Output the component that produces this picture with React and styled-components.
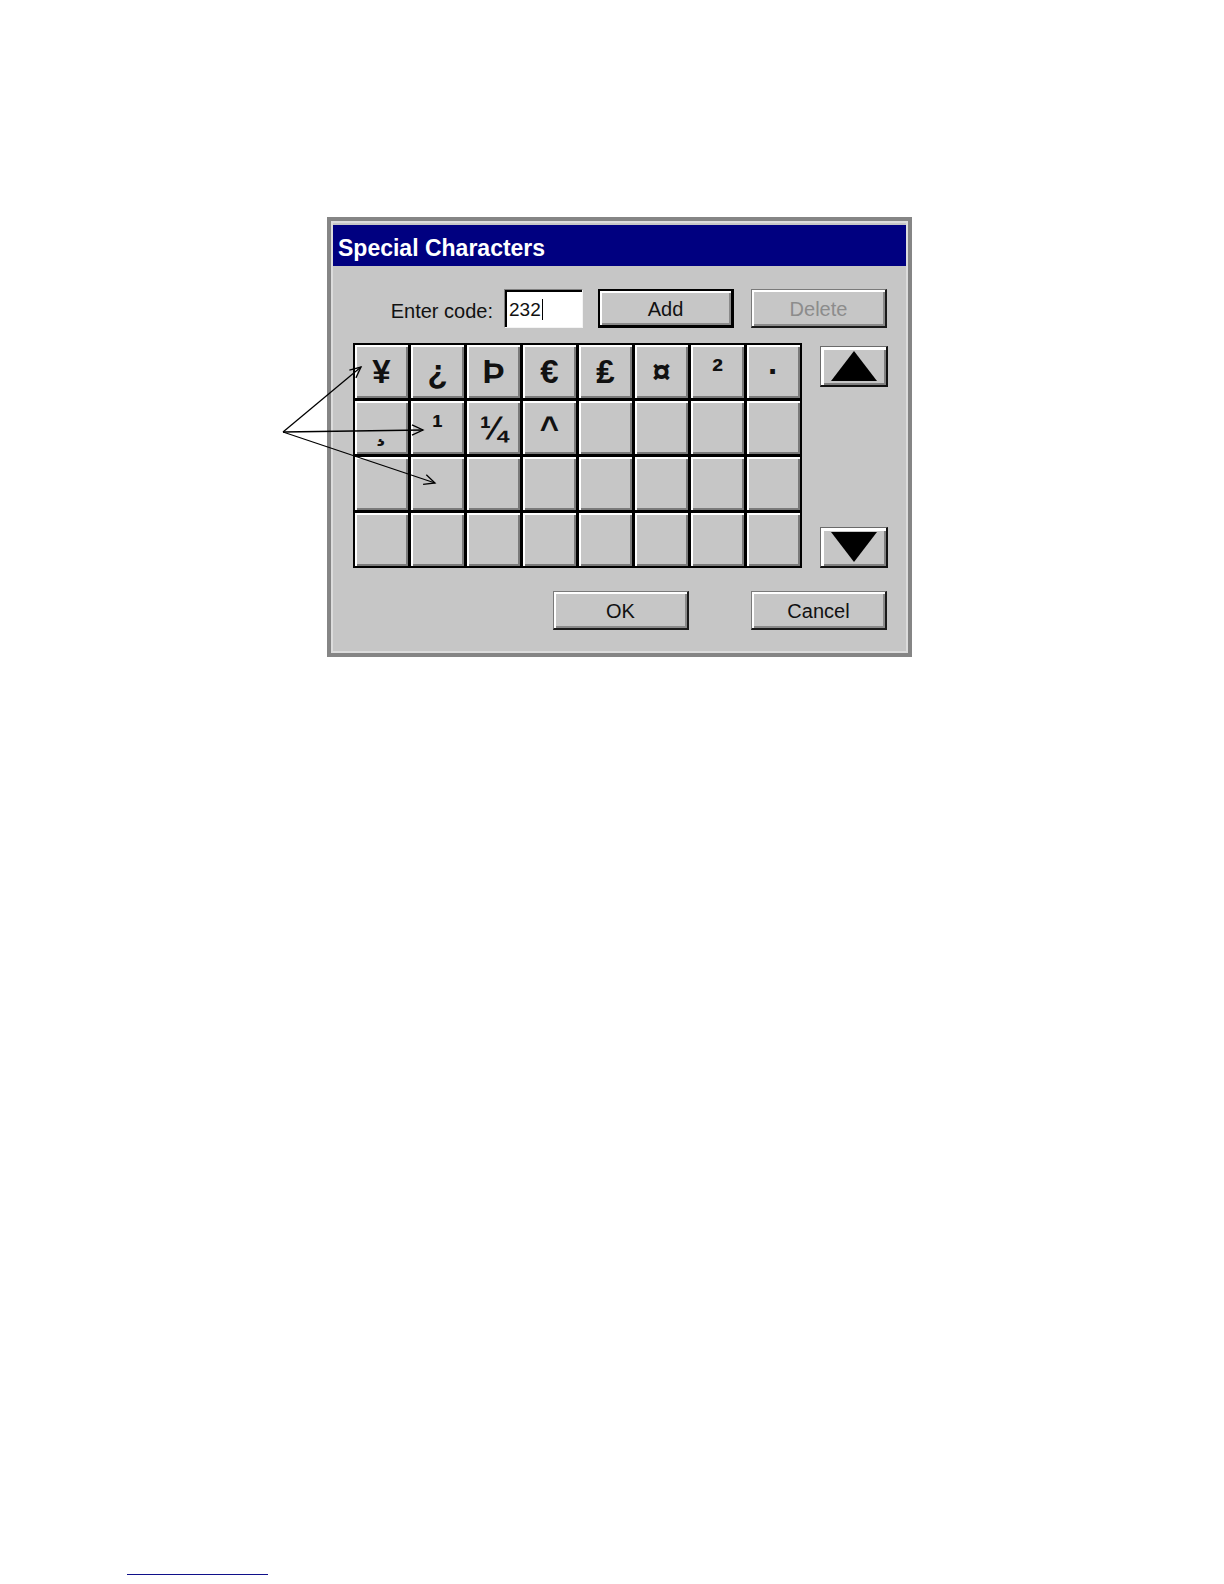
import styled, { createGlobalStyle } from 'styled-components';

const GlobalStyle = createGlobalStyle`
  html, body {
    margin: 0;
    padding: 0;
    background: #ffffff;
  }
  body {
    font-family: "Liberation Sans", Arial, sans-serif;
  }
`;

const Page = styled.div`
  position: relative;
  width: 1224px;
  height: 1584px;
  overflow: hidden;
  display: flex;
  flex-direction: column;
  align-items: flex-start;
`;

const Dialog = styled.div`
  width: 585px;
  margin: 217px 0 0 327px;
  box-sizing: border-box;
  border: 4px solid #858585;
  background: #c6c6c6;
  padding: 4px 2px 2px;
  box-shadow: inset 0 0 0 2px #dcdcdc;
`;

const TitleBar = styled.div`
  height: 41px;
  box-sizing: border-box;
  padding: 5px 0 0 5px;
  display: flex;
  align-items: center;
  background: #000080;
  color: #ffffff;
  font-size: 23px;
  font-weight: 700;
`;

const Body = styled.div`
  display: flex;
  flex-direction: column;
  padding: 23px 19px 21px 20px;
`;

const TopRow = styled.div`
  height: 39px;
  display: flex;
  justify-content: flex-end;
  align-items: center;
`;

const Label = styled.span`
  margin-right: 11px;
  padding-top: 5px;
  font-size: 20px;
  color: #111;
`;

const CodeField = styled.div`
  width: 79px;
  height: 39px;
  box-sizing: border-box;
  margin-right: 15px;
  padding: 2px 0 0 4px;
  display: flex;
  align-items: center;
  background: #ffffff;
  border: 1px solid;
  border-color: #808080 #f4f4f4 #f4f4f4 #808080;
  box-shadow: inset 2px 2px 0 #000;
  font-size: 19px;
  color: #111;
`;

const Caret = styled.span`
  display: inline-block;
  width: 1px;
  height: 21px;
  margin-left: 1px;
  background: #000;
`;

const Button = styled.button`
  width: 136px;
  height: 39px;
  box-sizing: border-box;
  margin: 0;
  padding: 2px 0 0;
  background: #c6c6c6;
  font-family: "Liberation Sans", Arial, sans-serif;
  font-size: 20px;
  color: ${(p) => (p.disabled ? '#8c8c8c' : '#111')};
  border-style: solid;
  border-width: ${(p) => (p.$isDefault ? '2px 3px 3px 2px' : '1px 2px 2px 1px')};
  border-color: ${(p) => (p.$isDefault ? '#000' : '#7a7a7a #1a1a1a #1a1a1a #7a7a7a')};
  box-shadow: inset 2px 2px 0 #ffffff, inset -2px -2px 0 #8a8a8a;
  margin-left: ${(p) => p.$gap || 0}px;
`;

const MiddleRow = styled.div`
  display: flex;
  gap: 18px;
  margin-top: 15px;
`;

const Grid = styled.div`
  display: grid;
  grid-template-columns: repeat(8, 53px);
  grid-auto-rows: 53px;
  gap: 3px;
  border: 2px solid #000;
  background: #000;
`;

const Cell = styled.div`
  display: flex;
  align-items: center;
  justify-content: center;
  background: #c6c6c6;
  box-shadow: inset 2px 2px 0 #ffffff, inset -2px -2px 0 #7a7a7a;
  font-size: 33px;
  font-weight: 700;
  color: #111;
  font-family: "Liberation Sans", "DejaVu Sans", sans-serif;
`;

const ArrowColumn = styled.div`
  display: flex;
  flex-direction: column;
  justify-content: space-between;
  padding-top: 3px;
`;

const ArrowButton = styled.button`
  width: 68px;
  height: 41px;
  box-sizing: border-box;
  margin: 0;
  padding: 0;
  display: flex;
  align-items: center;
  justify-content: center;
  background: #c6c6c6;
  border-style: solid;
  border-width: 1px 2px 2px 1px;
  border-color: #6a6a6a #111 #111 #6a6a6a;
  box-shadow: inset 3px 3px 0 #ffffff, inset -2px -2px 0 #808080;
`;

const BottomRow = styled.div`
  display: flex;
  justify-content: flex-end;
  margin-top: 23px;
`;

const FootnoteRule = styled.div`
  width: 141px;
  margin: 917px 0 0 127px;
  border-top: 1px solid #10108a;
`;

const Annotation = styled.svg`
  position: absolute;
  top: 0;
  left: 0;
  pointer-events: none;
`;

const chars = ['¥', '¿', 'Þ', '€', '₤', '¤', '²', '·', '¸', '¹', '¼', '^'];
const cells = Array.from({ length: 32 }, (_, i) => chars[i] || '');

const Triangle = ({ down }) => (
  <svg width="46" height="30" viewBox="0 0 46 30">
    <polygon points={down ? '0,0 46,0 23,30' : '23,0 46,30 0,30'} fill="#000" />
  </svg>
);

const App = () => {
  return (
    <Page>
      <GlobalStyle />
      <Dialog>
        <TitleBar>Special Characters</TitleBar>
        <Body>
          <TopRow>
            <Label>Enter code:</Label>
            <CodeField>
              232
              <Caret />
            </CodeField>
            <Button $isDefault>Add</Button>
            <Button disabled $gap={17}>
              Delete
            </Button>
          </TopRow>
          <MiddleRow>
            <Grid>
              {cells.map((c, i) => (
                <Cell key={i}>{c}</Cell>
              ))}
            </Grid>
            <ArrowColumn>
              <ArrowButton aria-label="up">
                <Triangle />
              </ArrowButton>
              <ArrowButton aria-label="down">
                <Triangle down />
              </ArrowButton>
            </ArrowColumn>
          </MiddleRow>
          <BottomRow>
            <Button>OK</Button>
            <Button $gap={62}>Cancel</Button>
          </BottomRow>
        </Body>
      </Dialog>
      <FootnoteRule />
      <Annotation width="1224" height="1584" viewBox="0 0 1224 1584">
        <g stroke="#000" strokeWidth="1.3" fill="none">
          <line x1="283" y1="432" x2="361" y2="367" />
          <polyline points="349.4,370.1 361,367 355.9,377.9" />
          <line x1="283" y1="432" x2="423" y2="430" />
          <polyline points="412,424.9 423,430 412,435.1" />
          <line x1="283" y1="432" x2="435" y2="483" />
          <polyline points="426.3,474.7 435,483 423.1,484.4" />
        </g>
      </Annotation>
    </Page>
  );
};

export default App;
